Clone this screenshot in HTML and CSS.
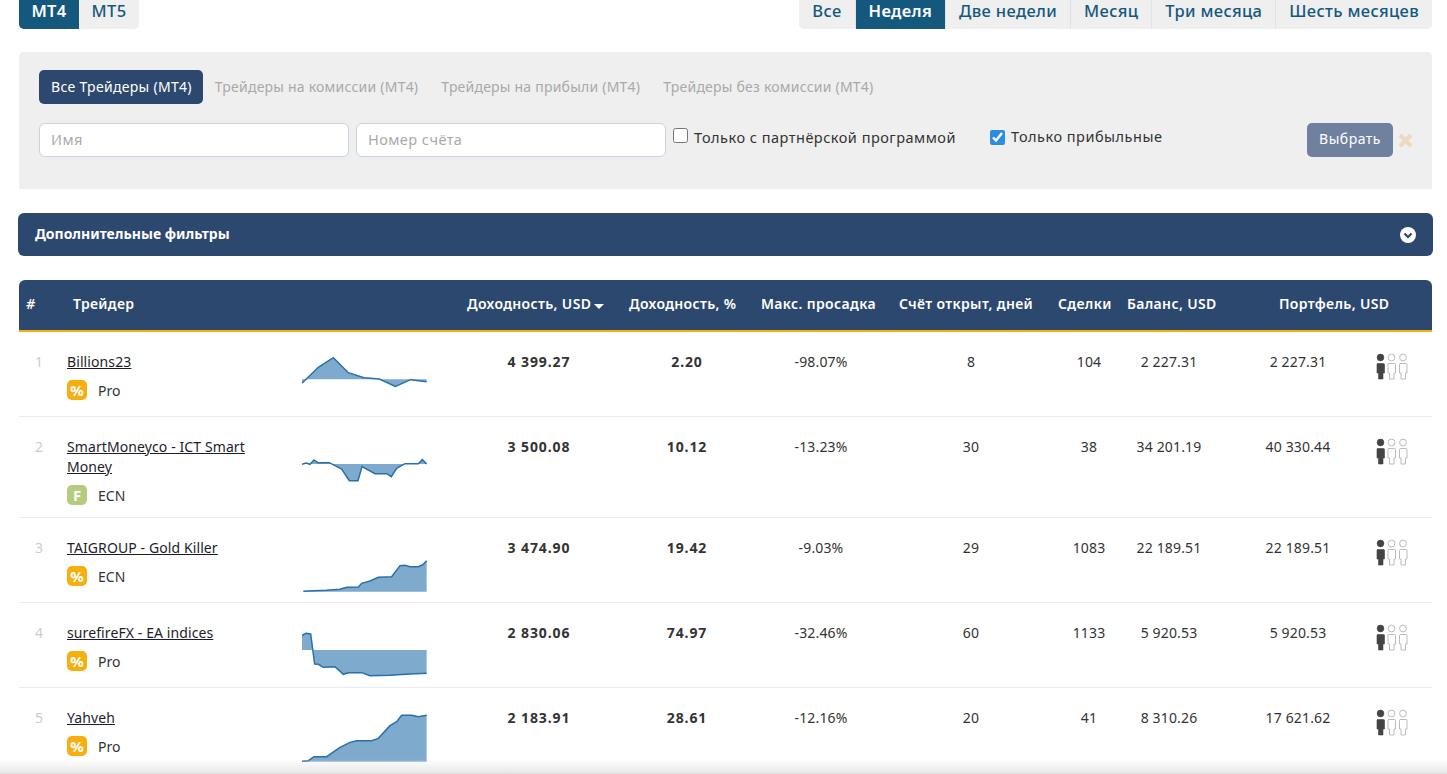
FILE: index.html
```html
<!DOCTYPE html>
<html lang="ru">

<head>
    <meta charset="UTF-8">
    <meta name="viewport" content="width=device-width, initial-scale=1.0">
    <title>Рейтинг трейдеров</title>
    <link rel="stylesheet" href="styles.css">
</head>

<body>
    <svg class="defs" width="0" height="0">
        <symbol id="person" viewBox="0 0 11 27">
            <circle cx="5.5" cy="4.5" r="3.4" />
            <path d="M2.5 10.5h6a1 1 0 0 1 1 1v8.500h-1.500v6h-4.500v-6h-1.500v-8.500a1 1 0 0 1 1-1z" />
        </symbol>
    </svg>

    <div class="page">
        <!-- верхние вкладки -->
        <div class="top-tabs">
            <div class="tabs platforms">
                <a class="tab active">MT4</a>
                <a class="tab">MT5</a>
            </div>
            <div class="tabs periods">
                <a class="tab">Все</a>
                <a class="tab active">Неделя</a>
                <a class="tab">Две недели</a>
                <a class="tab">Месяц</a>
                <a class="tab">Три месяца</a>
                <a class="tab">Шесть месяцев</a>
            </div>
        </div>

        <!-- фильтр -->
        <div class="filter">
            <div class="pills">
                <a class="pill active">Все Трейдеры (MT4)</a>
                <a class="pill">Трейдеры на комиссии (MT4)</a>
                <a class="pill">Трейдеры на прибыли (MT4)</a>
                <a class="pill">Трейдеры без комиссии (MT4)</a>
            </div>
            <div class="filter-row">
                <input class="field" type="text" placeholder="Имя">
                <input class="field" type="text" placeholder="Номер счёта">
                <label class="check check-partner"><input type="checkbox">Только с партнёрской программой</label>
                <label class="check check-profit"><input type="checkbox" checked>Только прибыльные</label>
                <button class="btn-select">Выбрать</button>
                <svg class="clear" width="15" height="15" viewBox="0 0 15 15">
                    <path d="M2 2l11 11M13 2L2 13" />
                </svg>
            </div>
        </div>

        <div class="more-filters">
            <span>Дополнительные фильтры</span>
            <svg class="chevron" width="16" height="16" viewBox="0 0 16 16">
                <circle cx="8" cy="8" r="8" fill="#fff" />
                <path d="M4.500 6.500L8 10l3.500-3.500" fill="none" stroke="#2c486e" stroke-width="2.200" />
            </svg>
        </div>

        <!-- таблица -->
        <div class="table-head">
            <span class="head-rank">#</span>
            <span>Трейдер</span>
            <span>Доходность, USD<i class="sort"></i></span>
            <span>Доходность, %</span>
            <span>Макс. просадка</span>
            <span>Счёт открыт, дней</span>
            <span>Сделки</span>
            <span>Баланс, USD</span>
            <span>Портфель, USD</span>
        </div>

        <div class="row">
            <div class="rank">1</div>
            <div class="trader">
                <a class="name">Billions23</a>
                <div class="type"><span class="badge">%</span><span class="type-label">Pro</span></div>
            </div>
            <svg class="spark" viewBox="36 15 375 180">
                <polygon class="spark-fill" points="36,115 85,67 130,38 175,83 222,98 268,102 316,124 362,104 410,110 410,103 36,103" />
                <polyline class="spark-line" points="36,115 85,67 130,38 175,83 222,98 268,102 316,124 362,104 410,110" />
            </svg>
            <div class="num strong">4 399.27</div>
            <div class="num strong">2.20</div>
            <div class="num">-98.07%</div>
            <div class="num">8</div>
            <div class="num">104</div>
            <div class="num">2 227.31</div>
            <div class="num portfolio">2 227.31</div>
            <svg class="people" width="33" height="27"><use href="#person" class="on" width="11" height="27" /><use href="#person" class="off" x="11" width="11" height="27" /><use href="#person" class="off" x="22.500" width="11" height="27" /></svg>
        </div>

        <div class="row">
            <div class="rank">2</div>
            <div class="trader">
                <a class="name">SmartMoneyco - ICT Smart Money</a>
                <div class="type"><span class="badge green">F</span><span class="type-label">ECN</span></div>
            </div>
            <svg class="spark" viewBox="36 270 375 180">
                <polygon class="spark-fill" points="36,358 48,354 60,358 72,345 84,353 118,353 135,362 155,372 178,407 204,407 216,365 255,386 290,386 304,395 320,370 345,356 385,356 397,344 410,357 36,357" />
                <polyline class="spark-line" points="36,358 48,354 60,358 72,345 84,353 118,353 135,362 155,372 178,407 204,407 216,365 255,386 290,386 304,395 320,370 345,356 385,356 397,344 410,357" />
            </svg>
            <div class="num strong">3 500.08</div>
            <div class="num strong">10.12</div>
            <div class="num">-13.23%</div>
            <div class="num">30</div>
            <div class="num">38</div>
            <div class="num">34 201.19</div>
            <div class="num portfolio">40 330.44</div>
            <svg class="people" width="33" height="27"><use href="#person" class="on" width="11" height="27" /><use href="#person" class="off" x="11" width="11" height="27" /><use href="#person" class="off" x="22.500" width="11" height="27" /></svg>
        </div>

        <div class="row">
            <div class="rank">3</div>
            <div class="trader">
                <a class="name">TAIGROUP - Gold Killer</a>
                <div class="type"><span class="badge">%</span><span class="type-label">ECN</span></div>
            </div>
            <svg class="spark" viewBox="36 18 375 180">
                <polygon class="spark-fill" points="40,184 70,182 110,181 150,178 170,172 205,171 215,160 240,153 265,142 305,140 330,107 345,106 360,110 385,110 400,103 410,92 410,185 40,185" />
                <polyline class="spark-line" points="40,184 70,182 110,181 150,178 170,172 205,171 215,160 240,153 265,142 305,140 330,107 345,106 360,110 385,110 400,103 410,92" />
            </svg>
            <div class="num strong">3 474.90</div>
            <div class="num strong">19.42</div>
            <div class="num">-9.03%</div>
            <div class="num">29</div>
            <div class="num">1083</div>
            <div class="num">22 189.51</div>
            <div class="num portfolio">22 189.51</div>
            <svg class="people" width="33" height="27"><use href="#person" class="on" width="11" height="27" /><use href="#person" class="off" x="11" width="11" height="27" /><use href="#person" class="off" x="22.500" width="11" height="27" /></svg>
        </div>

        <div class="row">
            <div class="rank">4</div>
            <div class="trader">
                <a class="name">surefireFX - EA indices</a>
                <div class="type"><span class="badge">%</span><span class="type-label">Pro</span></div>
            </div>
            <svg class="spark" viewBox="36 273 375 180">
                <polygon class="spark-fill" points="36,316 48,310 62,312 74,402 85,403 100,412 135,410 160,433 175,428 215,428 240,437 300,436 360,432 410,430 410,360 36,360" />
                <polyline class="spark-line" points="36,316 48,310 62,312 74,402 85,403 100,412 135,410 160,433 175,428 215,428 240,437 300,436 360,432 410,430" />
            </svg>
            <div class="num strong">2 830.06</div>
            <div class="num strong">74.97</div>
            <div class="num">-32.46%</div>
            <div class="num">60</div>
            <div class="num">1133</div>
            <div class="num">5 920.53</div>
            <div class="num portfolio">5 920.53</div>
            <svg class="people" width="33" height="27"><use href="#person" class="on" width="11" height="27" /><use href="#person" class="off" x="11" width="11" height="27" /><use href="#person" class="off" x="22.500" width="11" height="27" /></svg>
        </div>

        <div class="row">
            <div class="rank">5</div>
            <div class="trader">
                <a class="name">Yahveh</a>
                <div class="type"><span class="badge">%</span><span class="type-label">Pro</span></div>
            </div>
            <svg class="spark" viewBox="36 528 375 180">
                <polygon class="spark-fill" points="36,694 55,692 72,680 110,680 150,652 180,637 200,632 245,632 265,625 300,587 320,575 335,556 365,556 385,560 410,556 410,695 36,695" />
                <polyline class="spark-line" points="36,694 55,692 72,680 110,680 150,652 180,637 200,632 245,632 265,625 300,587 320,575 335,556 365,556 385,560 410,556" />
            </svg>
            <div class="num strong">2 183.91</div>
            <div class="num strong">28.61</div>
            <div class="num">-12.16%</div>
            <div class="num">20</div>
            <div class="num">41</div>
            <div class="num">8 310.26</div>
            <div class="num portfolio">17 621.62</div>
            <svg class="people" width="33" height="27"><use href="#person" class="on" width="11" height="27" /><use href="#person" class="off" x="11" width="11" height="27" /><use href="#person" class="off" x="22.500" width="11" height="27" /></svg>
        </div>
    </div>

    <div class="bottom-shade"></div>
</body>

</html>
```

FILE: styles.css
```css
html,
body {
    height: 774px;
    overflow: hidden;
}

body {
    margin: 0;
    background: #fff;
    font-family: "Noto Sans", "Open Sans", sans-serif;
    font-size: 14px;
    color: #333;
}

.defs {
    position: absolute;
}

.page {
    padding: 0 15px 0 19px;
}

/* верхние вкладки */
.top-tabs {
    display: flex;
    justify-content: space-between;
    height: 29px;
}

.tabs {
    display: flex;
    background: #efefef;
    border-radius: 0 0 5px 5px;
    overflow: hidden;
}

.tab {
    padding: 0 13px;
    font-size: 16.500px;
    font-weight: 500;
    line-height: 21px;
    letter-spacing: 0.35px;
    color: #15587d;
}

.platforms .tab {
    width: 60px;
    box-sizing: border-box;
    padding: 0;
    text-align: center;
}

.periods .tab + .tab {
    border-left: 1px solid #e2e2e2;
}

.tab.active {
    background: #15587d;
    color: #fff;
    font-weight: 600;
}

/* фильтр */
.filter {
    height: 137px;
    box-sizing: border-box;
    margin-top: 23px;
    padding: 18px 20px 0;
    background: #efefef;
    border-radius: 5px 5px 0 0;
}

.pills {
    display: flex;
}

.pill {
    padding: 0 11px 0 12px;
    line-height: 34px;
    letter-spacing: 0.22px;
    color: #a9a9a9;
    border-radius: 5px;
}

.pill.active {
    background: #2c486e;
    color: #fff;
    letter-spacing: 0.3px;
}

.filter-row {
    display: flex;
    margin-top: 19px;
}

.field {
    flex: none;
    width: 310px;
    height: 34px;
    box-sizing: border-box;
    margin-right: 7px;
    padding: 0 11px 2px;
    border: 1px solid #c8d4e0;
    border-radius: 6px;
    font: inherit;
    font-size: 14.500px;
    letter-spacing: 0.45px;
    outline: none;
}

.field::placeholder {
    color: #a9a9a9;
}

.check {
    flex: none;
    display: flex;
    align-items: center;
    width: 317px;
    height: 28px;
    font-size: 14.500px;
    letter-spacing: 0.5px;
}

.check input {
    align-self: flex-start;
    width: 15px;
    height: 15px;
    margin: 5px 6px 0 0;
    accent-color: #2b8ee0;
}

.check-profit {
    height: 26px;
}

.check-profit input {
    margin-top: 7px;
}

.btn-select {
    flex: none;
    width: 86px;
    height: 34px;
    padding: 0 0 3px;
    border: 0;
    border-radius: 5px;
    background: #6f819f;
    color: #fff;
    font: inherit;
    letter-spacing: 0.5px;
}

.clear {
    flex: none;
    margin: 10px 0 0 5px;
    fill: none;
    stroke: #ecd9c0;
    stroke-width: 4;
}

.more-filters {
    display: flex;
    align-items: center;
    justify-content: space-between;
    height: 43px;
    box-sizing: border-box;
    margin: 24px -1px 0 -1px;
    padding: 0 17px;
    background: #2c486e;
    border-radius: 6px;
    color: #fff;
    font-size: 14px;
    font-weight: 700;
}

.more-filters span {
    margin-top: -3px;
}

/* таблица */
.table-head {
    display: grid;
    grid-template-columns: 54px 394px 162px 132px 138px 159px 69px 152px auto;
    align-items: center;
    height: 50px;
    box-sizing: content-box;
    margin-top: 24px;
    background: #2c486e;
    border-bottom: 2px solid #f5b00f;
    border-radius: 6px 6px 0 0;
    color: #fff;
    font-size: 14px;
    font-weight: 600;
    letter-spacing: 0.35px;
}

.table-head span {
    margin-top: -3px;
}

.head-rank {
    padding-left: 7px;
    font-style: italic;
}

.sort {
    display: inline-block;
    margin-left: 3px;
    border: 5.500px solid transparent;
    border-top-color: #fff;
    border-bottom: 0;
}

.row {
    display: grid;
    grid-template-columns: 48px 235px 125px 23px 178px 118px 150px 150px 86px 74px 169px 33px;
    min-height: 84px;
    border-bottom: 1px solid #e6ecef;
    line-height: 20px;
}

.rank {
    padding: 20px 0 0 16px;
    color: #c8cfca;
}

.trader {
    padding: 20px 40px 12px 0;
}

.name {
    color: #1d1d2b;
    letter-spacing: 0.1px;
    text-decoration: underline;
}

.type {
    display: flex;
    align-items: center;
    height: 20px;
    margin-top: 8px;
}

.type-label {
    padding-top: 1px;
}

.badge {
    width: 20px;
    height: 20px;
    margin-right: 11px;
    background: #f7ae0f;
    border-radius: 5px;
    color: #fff;
    font-size: 15px;
    font-weight: 700;
    text-align: center;
}

.badge.green {
    background: #b5cc7f;
}

.spark {
    grid-column: 3;
    width: 125px;
    height: 60px;
    margin-top: 18px;
}

.spark-fill {
    fill: #7eaacd;
}

.spark-line {
    fill: none;
    stroke: #2a6faa;
    stroke-width: 4.500;
}

.num {
    padding-top: 20px;
    letter-spacing: 0.15px;
    text-align: center;
}

.spark + .num {
    grid-column: 5;
}

.strong {
    font-weight: 700;
    letter-spacing: 0.9px;
}

.portfolio {
    padding-left: 15px;
}

.people {
    margin-top: 21px;
}

.people .on {
    fill: #444;
    stroke: #444;
    stroke-width: 0.6;
}

.people .off {
    fill: #fff;
    stroke: #bbb;
    stroke-width: 1;
}

.bottom-shade {
    position: fixed;
    left: 0;
    right: 0;
    bottom: 0;
    height: 14px;
    background: linear-gradient(rgba(230, 230, 230, 0), #e8e8e8);
    border-bottom: 1px solid #ddd;
}
```
